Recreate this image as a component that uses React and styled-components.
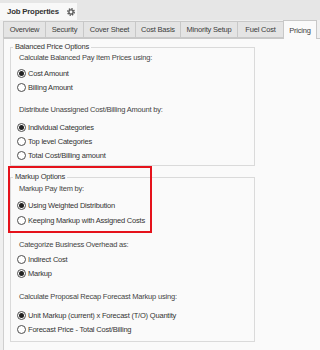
import React from 'react'
import styled, { createGlobalStyle } from 'styled-components'

const GlobalStyle = createGlobalStyle`
  html, body {
    margin: 0;
    padding: 0;
    background: #efefef;
  }
  body {
    font-family: "Liberation Sans", Arial, sans-serif;
    font-size: 7.5px;
    letter-spacing: -0.2px;
    color: #3a3a3a;
  }
`

const tabs = [
  { label: 'Overview', w: 43 },
  { label: 'Security', w: 39 },
  { label: 'Cover Sheet', w: 53 },
  { label: 'Cost Basis', w: 46 },
  { label: 'Minority Setup', w: 58 },
  { label: 'Fuel Cost', w: 47 },
  { label: 'Pricing', w: 34, active: true },
]

const groups = [
  {
    title: 'Balanced Price Options',
    mt: 0,
    pb: 3,
    sections: [
      { caption: 'Calculate Balanced Pay Item Prices using:', mt: 0, gap: 2, row: 14, options: ['Cost Amount', 'Billing Amount'], checked: 0 },
      { caption: 'Distribute Unassigned Cost/Billing Amount by:', mt: 10, gap: 4, row: 14, options: ['Individual Categories', 'Top level Categories', 'Total Cost/Billing amount'], checked: 0 },
    ],
  },
  {
    title: 'Markup Options',
    mt: 6,
    pb: 5,
    sections: [
      { caption: 'Markup Pay Item by:', mt: 1, gap: 3, row: 15, options: ['Using Weighted Distribution', 'Keeping Markup with Assigned Costs'], checked: 0 },
      { caption: 'Categorize Business Overhead as:', mt: 11, gap: 1, row: 14, options: ['Indirect Cost', 'Markup'], checked: 1 },
      { caption: 'Calculate Proposal Recap Forecast Markup using:', mt: 11, gap: 5, row: 14, options: ['Unit Markup (current) x Forecast (T/O) Quantity', 'Forecast Price - Total Cost/Billing'], checked: 0 },
    ],
  },
]

const GearIcon = () => (
  <svg width='8' height='8' viewBox='0 0 8 8'>
    <circle cx='4' cy='4' r='3.2' fill='none' stroke='#5a5a5a' strokeWidth='1.5' strokeDasharray='1.4 1.1' />
    <circle cx='4' cy='4' r='2.1' fill='none' stroke='#5a5a5a' strokeWidth='1.3' />
  </svg>
)

const App = () => {
  return (
    <Window>
      <GlobalStyle />
      <TitleBar>
        <TitleTab>
          <span>Job Properties</span>
          <GearIcon />
        </TitleTab>
      </TitleBar>
      <TabStrip>
        {tabs.map((t) => (
          <Tab key={t.label} $w={t.w} $active={t.active}>{t.label}</Tab>
        ))}
      </TabStrip>
      <Panel>
        {groups.map((g) => (
          <Group key={g.title} $mt={g.mt} $pb={g.pb}>
            <Legend>{g.title}</Legend>
            {g.sections.map((s) => (
              <Section key={s.caption} $mt={s.mt}>
                <Caption>{s.caption}</Caption>
                <RadioList $gap={s.gap}>
                  {s.options.map((o, i) => (
                    <RadioRow key={o} $row={s.row}>
                      <Circle $checked={i === s.checked} />
                      <span>{o}</span>
                    </RadioRow>
                  ))}
                </RadioList>
              </Section>
            ))}
          </Group>
        ))}
        <Highlight />
      </Panel>
    </Window>
  )
}

export default App

const Window = styled.div`
  width: 320px;
  height: 350px;
  overflow: hidden;
  display: flex;
  flex-direction: column;
  background: #efefef;
`

const TitleBar = styled.div`
  height: 20px;
  display: flex;
  align-items: flex-end;
  background: #e6e6e6;
`

const TitleTab = styled.div`
  width: 77px;
  height: 17px;
  box-sizing: border-box;
  padding-left: 7px;
  display: flex;
  align-items: center;
  gap: 8px;
  background: #f8f8f8;
  font-size: 7.8px;
  font-weight: bold;
  letter-spacing: -0.2px;
  color: #333;
`

const TabStrip = styled.div`
  height: 18px;
  display: flex;
  align-items: flex-end;
  padding-left: 3px;
  background: #efefef;
  position: relative;
  z-index: 1;
`

const Tab = styled.div`
  width: ${(p) => p.$w}px;
  height: ${(p) => (p.$active ? '19px' : '17px')};
  box-sizing: border-box;
  flex-shrink: 0;
  white-space: nowrap;
  margin-left: -1px;
  margin-bottom: ${(p) => (p.$active ? '-1px' : '0')};
  display: flex;
  align-items: center;
  justify-content: center;
  border: 1px solid #c8c8c8;
  border-bottom: ${(p) => (p.$active ? 'none' : '1px solid #c8c8c8')};
  background: ${(p) => (p.$active ? '#fafafa' : '#e4e4e4')};
  color: #3c3c3c;
  &:first-child {
    margin-left: 0;
  }
`

const Panel = styled.div`
  flex: 1;
  position: relative;
  margin-left: 3px;
  padding: 3px 0 0 6px;
  border-left: 1px solid #cfcfcf;
  border-top: 1px solid #c8c8c8;
  background: #fafafa;
`

const Group = styled.fieldset`
  width: 245px;
  box-sizing: border-box;
  margin: ${(p) => p.$mt}px 0 0 0;
  padding: 0 8px ${(p) => p.$pb}px 8px;
  border: 1px solid #dadada;
  min-width: 0;
`

const Legend = styled.legend`
  margin-left: -6px;
  padding: 0 2px;
  line-height: 10px;
  color: #333;
`

const Section = styled.div`
  margin-top: ${(p) => p.$mt}px;
`

const Caption = styled.div`
  line-height: 12px;
  white-space: nowrap;
  color: #444;
`

const RadioList = styled.div`
  margin-top: ${(p) => p.$gap}px;
  display: flex;
  flex-direction: column;
`

const RadioRow = styled.div`
  height: ${(p) => p.$row}px;
  margin-left: -2px;
  display: flex;
  align-items: center;
  gap: 2px;
  white-space: nowrap;
  color: #333;
`

const Circle = styled.span`
  width: 9px;
  height: 9px;
  box-sizing: border-box;
  border-radius: 50%;
  border: 1px solid #4d4d4d;
  background: #fff;
  display: flex;
  align-items: center;
  justify-content: center;
  flex-shrink: 0;
  &::after {
    content: '';
    width: 5px;
    height: 5px;
    border-radius: 50%;
    background: ${(p) => (p.$checked ? '#222' : 'transparent')};
  }
`

const Highlight = styled.div`
  position: absolute;
  left: 4px;
  top: 127px;
  width: 144px;
  height: 67px;
  box-sizing: border-box;
  border: 2px solid #e5121b;
  pointer-events: none;
`
